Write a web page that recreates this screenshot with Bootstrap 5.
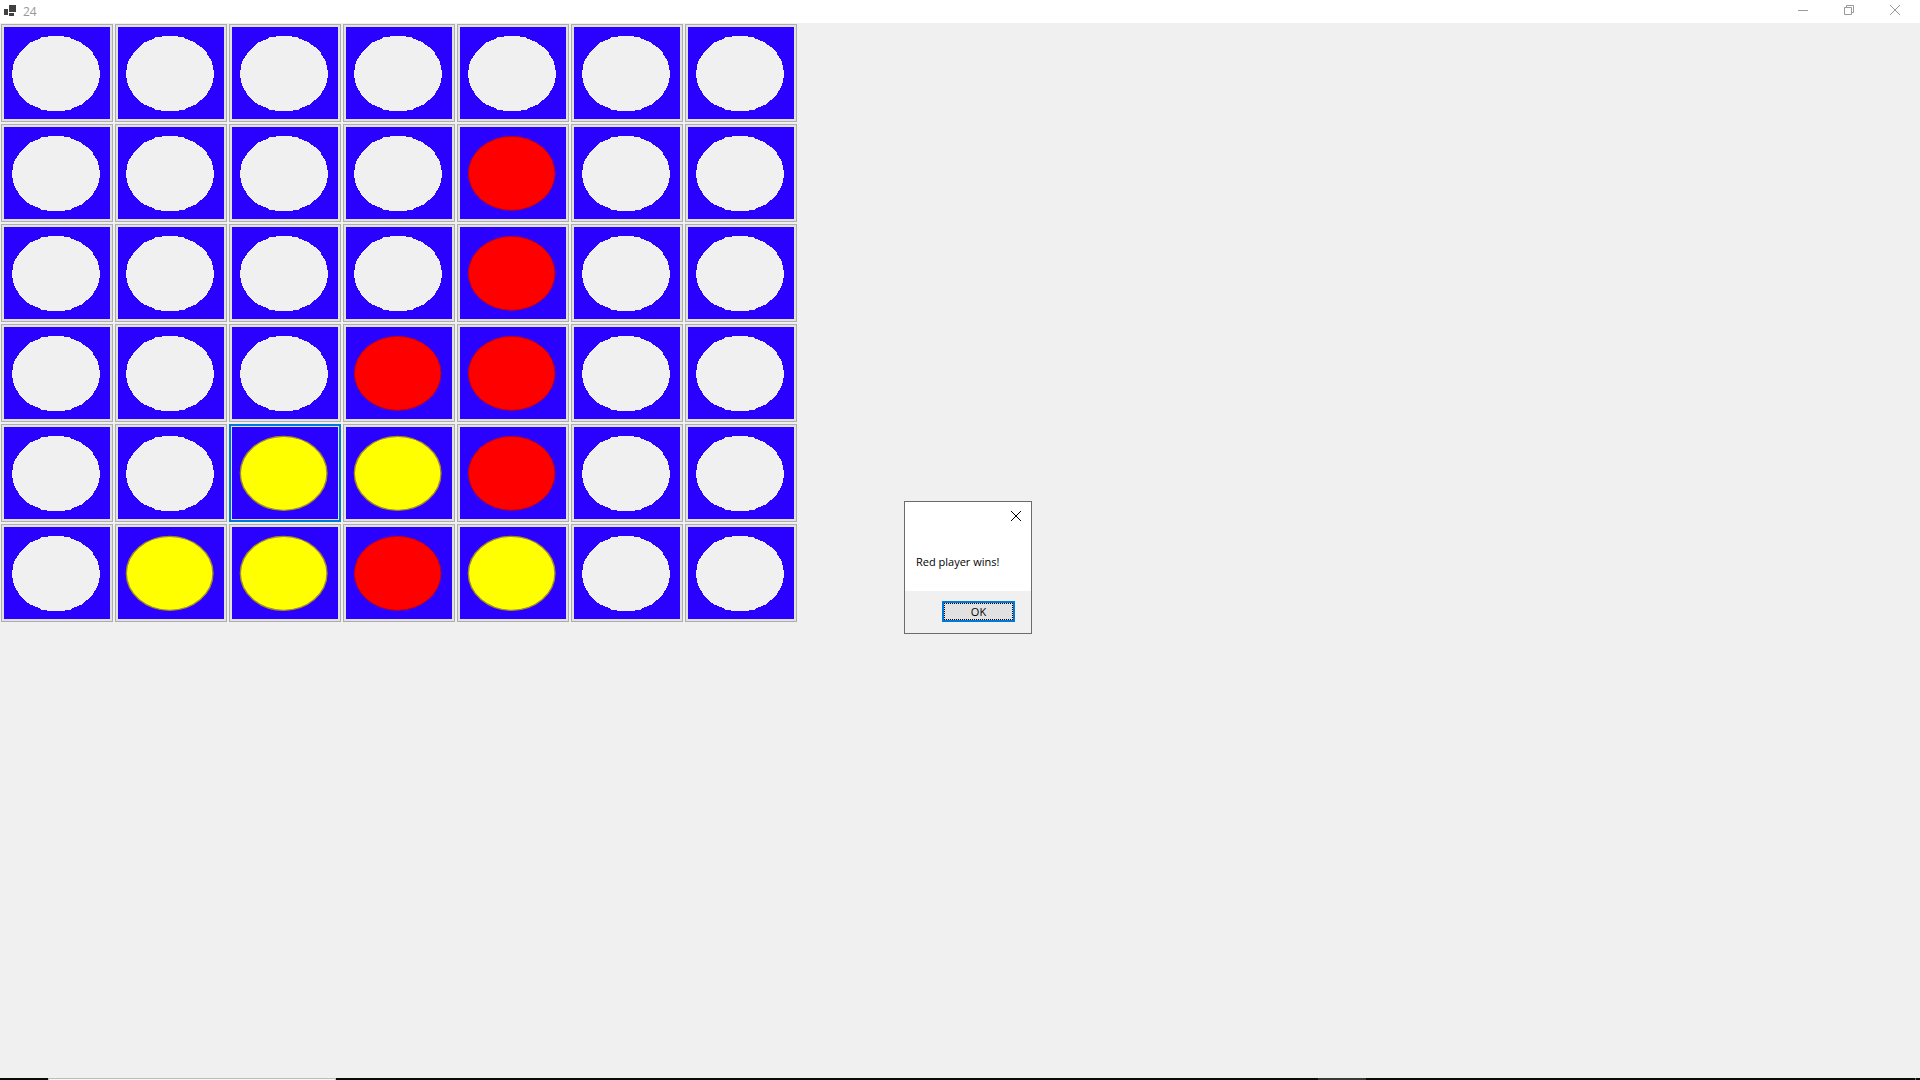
<!DOCTYPE html>
<html lang="en">
<head>
<meta charset="utf-8">
<meta name="viewport" content="width=device-width, initial-scale=1">
<title>24</title>
<link href="https://cdn.jsdelivr.net/npm/bootstrap@5.3.0/dist/css/bootstrap.min.css" rel="stylesheet">
<style>
  body { background: #f0f0f0; color: #000; font-family: "Open Sans", "Noto Sans", sans-serif; font-size: 11px; line-height: 16px; }
  svg { display: block; }
  .title-bar { height: 23px; color: #999; padding: 0 2px 0 4px; }
  .title-text { font-size: 12px; margin-left: 6px; }
  .win-btn { width: 46px; height: 20px; border: 0; background: transparent; color: #999; padding: 0; }
  .board { display: grid; grid-template-columns: repeat(7, 112px); gap: 2px; padding: 1px; }
  .slot { border: 1px solid #adadad; background: #e1e1e1; padding: 2px; height: 98px; }
  .slot svg { width: 106px; height: 92px; background: #2a00ff; }
  .slot.current { border: 2px solid #0078d7; padding: 1px; }
  .message-box { width: 128px; border: 1px solid #6b6b6b; background: #fff; top: 501px; left: calc(50% - 56px); }
  .message-close { border: 0; background: transparent; padding: 9px 10px; }
  .message-text { padding: 24px 11px 21px; white-space: nowrap; }
  .message-foot { background: #f0f0f0; padding: 10px 16px 11px; }
  .ok-btn { width: 73px; height: 21px; border: 2px solid #0078d7; background: #e1e1e1; color: #000; padding: 0; }
  .ok-btn span { display: block; border: 1px dotted #000; height: 17px; line-height: 15px; }
  .task-strip { height: 2px; background: #0b0b0e; }
  .task-field { width: 288px; margin-left: 48px; background: #f7f7f7; border: 1px solid #bdbdbd; border-bottom: 0; }
  .task-item { width: 48px; margin-left: auto; margin-right: 549px; background: #3a3a3c; }
  .task-edge { width: 1px; margin-right: 4px; background: #6a6a6a; }
</style>
</head>
<body class="vh-100 d-flex flex-column overflow-hidden">
<svg width="0" height="0" class="position-absolute" aria-hidden="true">
  <defs>
    <symbol id="hole" viewBox="12 81 318 276"><path fill="#f0f0f0" shape-rendering="crispEdges" d="M144 108H192V111H210V114L240 126 261 141 279 159V162L291 180V183H294L297 204V210H300V234H297V240L294 258H291V261L279 282V285L261 300 243 315H240L213 327V330H195V333H141V330H123V327L96 315H93L75 303 57 285V282L45 261V258H42L39 240V234H36V210H39V204L42 183H45V180L57 162V159L75 141 93 126H96L123 114V111H144Z"/></symbol>
    <symbol id="red" viewBox="12 81 318 276"><ellipse cx="167" cy="220" rx="130" ry="111" fill="#f00" stroke="#b00028" stroke-width="3"/></symbol>
    <symbol id="yellow" viewBox="12 81 318 276"><ellipse cx="167" cy="220" rx="130" ry="111" fill="#ff0" stroke="#a08a28" stroke-width="4"/></symbol>
  </defs>
</svg>
<header class="title-bar bg-white d-flex align-items-start flex-shrink-0">
  <svg class="mt-1" width="13" height="13" viewBox="0 0 13 13" fill="#404040" shape-rendering="crispEdges"><path d="M0 5h4v6H0zM5 1h7v7H5zM5 9h5v3H5z"/></svg>
  <span class="title-text mt-1">24</span>
  <div class="ms-auto d-flex">
    <button class="win-btn d-flex align-items-center justify-content-center" aria-label="Minimize"><svg width="10" height="10" viewBox="0 0 10 10"><path d="M0 5.500h10" stroke="currentColor"/></svg></button>
    <button class="win-btn d-flex align-items-center justify-content-center" aria-label="Restore"><svg width="10" height="10" viewBox="0 0 10 10" fill="none" stroke="currentColor"><path d="M.5 2.500h7v7h-7zM2.500 2.500v-2h7v7h-2"/></svg></button>
    <button class="win-btn d-flex align-items-center justify-content-center" aria-label="Close"><svg width="10" height="10" viewBox="0 0 10 10"><path d="M0 0l10 10M10 0L0 10" stroke="currentColor"/></svg></button>
  </div>
</header>
<main class="board flex-grow-1 align-content-start" id="board"></main>
<footer class="task-strip d-flex flex-shrink-0"><div class="task-field"></div><div class="task-item"></div><div class="task-edge"></div></footer>
<section class="message-box position-absolute" role="dialog" aria-labelledby="message">
  <div class="d-flex justify-content-end"><button class="message-close" aria-label="Close message"><svg width="10" height="10" viewBox="0 0 10 10"><path d="M0 0l10 10M10 0L0 10" stroke="#000"/></svg></button></div>
  <div class="message-text" id="message">Red player wins!</div>
  <div class="message-foot d-flex justify-content-end"><button class="ok-btn"><span>OK</span></button></div>
</section>
<script src="https://cdn.jsdelivr.net/npm/bootstrap@5.3.0/dist/js/bootstrap.bundle.min.js"></script>
<script>
  const rows = [".......", "....R..", "....R..", "...RR..", "..YYR..", ".YYRY.."];
  const shapes = { ".": "hole", R: "red", Y: "yellow" };
  const board = document.getElementById("board");
  rows.forEach((row, r) => [...row].forEach((piece, c) => {
    const slot = document.createElement("button");
    slot.className = "slot" + (r === 4 && c === 2 ? " current" : "");
    slot.setAttribute("aria-label", `Row ${r + 1}, column ${c + 1}`);
    slot.innerHTML = `<svg><use href="#${shapes[piece]}"/></svg>`;
    board.append(slot);
  }));
</script>
</body>
</html>
